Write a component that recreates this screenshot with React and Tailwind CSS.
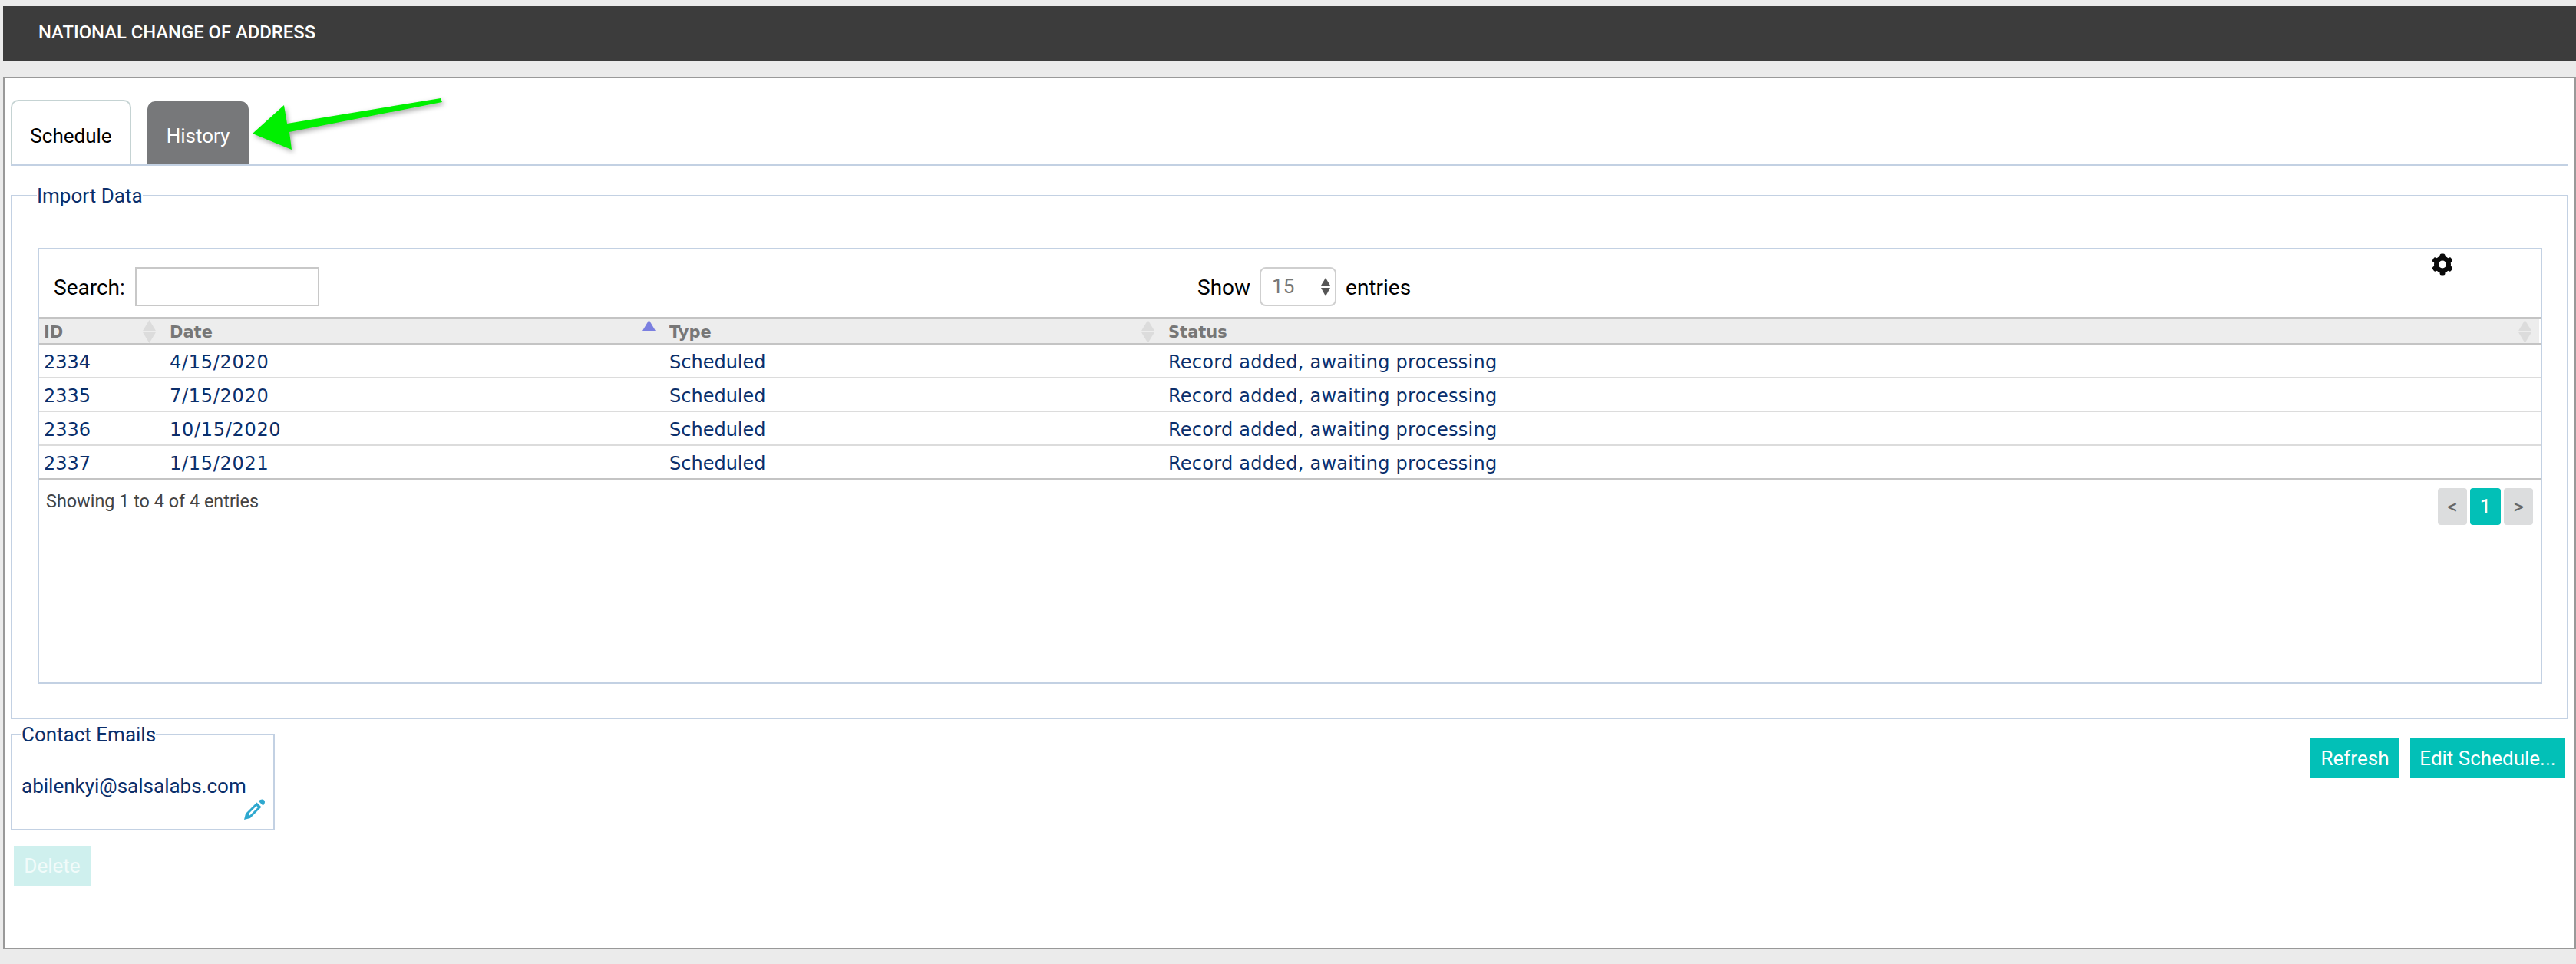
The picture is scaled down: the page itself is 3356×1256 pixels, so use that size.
import React from "react";

const rows = [
  ["2334", "4/15/2020"],
  ["2335", "7/15/2020"],
  ["2336", "10/15/2020"],
  ["2337", "1/15/2021"],
];

function Sort({ active }) {
  return (
    <svg width="17" height="30" viewBox="0 0 17 30" className="shrink-0">
      <path d="M8.5 0L17 14H0z" fill={active ? "#7b7fe0" : "#dcdcdc"} />
      {!active && <path d="M0 16H17L8.5 30z" fill="#dcdcdc" />}
    </svg>
  );
}

function Gear() {
  return (
    <svg className="absolute left-[3117px] top-[5px]" width="28" height="29" viewBox="0 0 28 29">
      <g fill="#0a0a0a">
        {[0, 60, 120, 180, 240, 300].map((a) => (
          <rect key={a} x="10.5" y="0.5" width="7" height="7" rx="2.5" transform={`rotate(${a} 14 14.5)`} />
        ))}
      </g>
      <circle cx="14" cy="14.5" r="8" fill="none" stroke="#0a0a0a" strokeWidth="6" />
    </svg>
  );
}

function Th({ label, w, active, pl = "pl-2" }) {
  return (
    <div className={`flex items-start justify-between ${pl} pr-[10px] pt-[2px] ${w}`}>
      <span className="mt-[2px] text-[21px] leading-[28px] font-bold text-[#777]">{label}</span>
      <Sort active={active} />
    </div>
  );
}

export default function App() {
  return (
    <div className="min-h-[1256px] bg-[#ebebeb] pt-2 pl-1 font-['Roboto',sans-serif] overflow-hidden">
      <div className="flex h-[72px] items-center bg-[#3c3c3c] pl-[46px] pb-[2px] text-[23.8px] font-medium text-white">
        NATIONAL CHANGE OF ADDRESS
      </div>
      <div className="relative mt-5 h-[1137px] border-2 border-[#999] bg-white pl-2 pr-2">
        <div className="mt-[28px] flex items-end border-b-2 border-[#c3d1e3] pt-0">
          <div className="flex h-[84px] w-[157px] items-center justify-center rounded-t-[10px] border-2 border-b-0 border-[#c5d3d3] pt-[8px] text-[26px] text-black">
            Schedule
          </div>
          <div className="ml-[21px] flex h-[82px] w-[132px] items-center justify-center rounded-t-[10px] bg-[#77787a] pt-[8px] text-[26px] text-white">
            History
          </div>
        </div>

        <svg className="absolute left-[304px] top-[10px] drop-shadow-[2px_3px_3px_rgba(0,0,0,0.35)]" width="270" height="100" viewBox="0 0 270 100">
          <path d="M264 16L266 21L67 60L70 83L19 62L60 25L64 49z" fill="#00f000" />
        </svg>

        <fieldset className="mt-[24px] border-2 border-[#c3d1e3] pl-[33px] pr-[32px] pb-[44px]">
          <legend className="-ml-px text-[26px] leading-[30px] text-[#0b2f6b]">Import Data</legend>
          <div className="relative mt-[53px] h-[568px] border-2 border-[#c3d1e3]">
            <Gear />
            <div className="flex h-[88px] items-start pt-[23px] text-[28px] leading-[53px] text-black">
              <div className="flex w-[1509px] pl-[19px]">
                <span>Search:</span>
                <div className="ml-[13px] h-[51px] w-[240px] border-2 border-[#c8c8c8] bg-white" />
              </div>
              <div className="flex">
                <span>Show</span>
                <div className="ml-[12px] flex h-[51px] w-[100px] items-center justify-between rounded-[8px] border-2 border-[#cfcfcf] pl-[14px] pr-[6px] text-[26px] text-[#777]">
                  <span>15</span>
                  <svg width="12" height="24" viewBox="0 0 12 24">
                    <path d="M6 0L12 10H0z" fill="#555" />
                    <path d="M0 13H12L6 24z" fill="#555" />
                  </svg>
                </div>
                <span className="ml-[12px]">entries</span>
              </div>
            </div>

            <div className="border-y-2 border-[#c4c4c4] font-['DejaVu_Sans',sans-serif]">
              <div className="mr-[2px] flex h-[32px] bg-[#ededed]">
                <Th label="ID" w="w-[162px]" pl="pl-[6px]" />
                <Th label="Date" w="w-[651px]" active />
                <Th label="Type" w="w-[650px]" />
                <Th label="Status" w="flex-1" />
              </div>
            </div>
            {rows.map(([id, date], i) => (
              <div
                key={id}
                className={`flex h-[44px] items-center border-b-2 pt-[3px] font-['DejaVu_Sans',sans-serif] text-[24px] text-[#0b2f6b] ${i === 3 ? "border-[#c4c4c4]" : "border-[#dcdcdc]"}`}
              >
                <div className="w-[162px] pl-[6px]">{id}</div>
                <div className="w-[651px] pl-2 tracking-[0.7px]">{date}</div>
                <div className="w-[650px] pl-2">Scheduled</div>
                <div className="flex-1 pl-2 tracking-[0.25px]">Record added, awaiting processing</div>
              </div>
            ))}

            <div className="flex items-start justify-between pl-[9px] pr-[10px] pt-[11px]">
              <span className="mt-[4px] text-[23.4px] leading-[26px] text-[#444]">Showing 1 to 4 of 4 entries</span>
              <div className="flex gap-[4px] text-[26px]">
                <div className="flex h-[48px] w-[38px] items-center justify-center rounded-[4px] bg-[#dcddde] text-[#666]">&lt;</div>
                <div className="flex h-[48px] w-[40px] items-center justify-center rounded-[4px] bg-[#02c0b7] text-white">1</div>
                <div className="flex h-[48px] w-[38px] items-center justify-center rounded-[4px] bg-[#dcddde] text-[#666]">&gt;</div>
              </div>
            </div>
          </div>
        </fieldset>

        <div className="mt-[5px] flex items-start justify-between pr-[4px]">
          <fieldset className="relative h-[140px] w-[344px] border-2 border-[#c3d1e3] pl-[12px]">
            <legend className="text-[26px] leading-[30px] text-[#0b2f6b]">Contact Emails</legend>
            <div className="mt-[36px] text-[26px] leading-[32px] text-[#0b2f6b]">abilenkyi@salsalabs.com</div>
            <svg className="absolute right-[11px] bottom-[12px]" width="27" height="27" viewBox="0 0 27 27">
              <path d="M16.5 4.5L22.5 10.5L8 25L0 27L2 19z" fill="#2ea8cf" />
              <path d="M6.5 20.5L17 10" stroke="#fff" strokeWidth="2.5" />
              <path d="M19 3C21 0 24.5 0 26 1.5C27.5 3 27.5 6 24.5 8.5z" fill="#2ea8cf" />
            </svg>
          </fieldset>
          <div className="mt-[20px] flex gap-[14px] text-[26px] text-white">
            <button className="h-[52px] w-[116px] bg-[#02c0b7]">Refresh</button>
            <button className="h-[52px] w-[202px] bg-[#02c0b7]">Edit Schedule...</button>
          </div>
        </div>

        <button className="mt-[20px] ml-[4px] h-[52px] w-[100px] bg-[#cff0ee] text-[26px] text-[#f1fbfa]">Delete</button>
      </div>
    </div>
  );
}
